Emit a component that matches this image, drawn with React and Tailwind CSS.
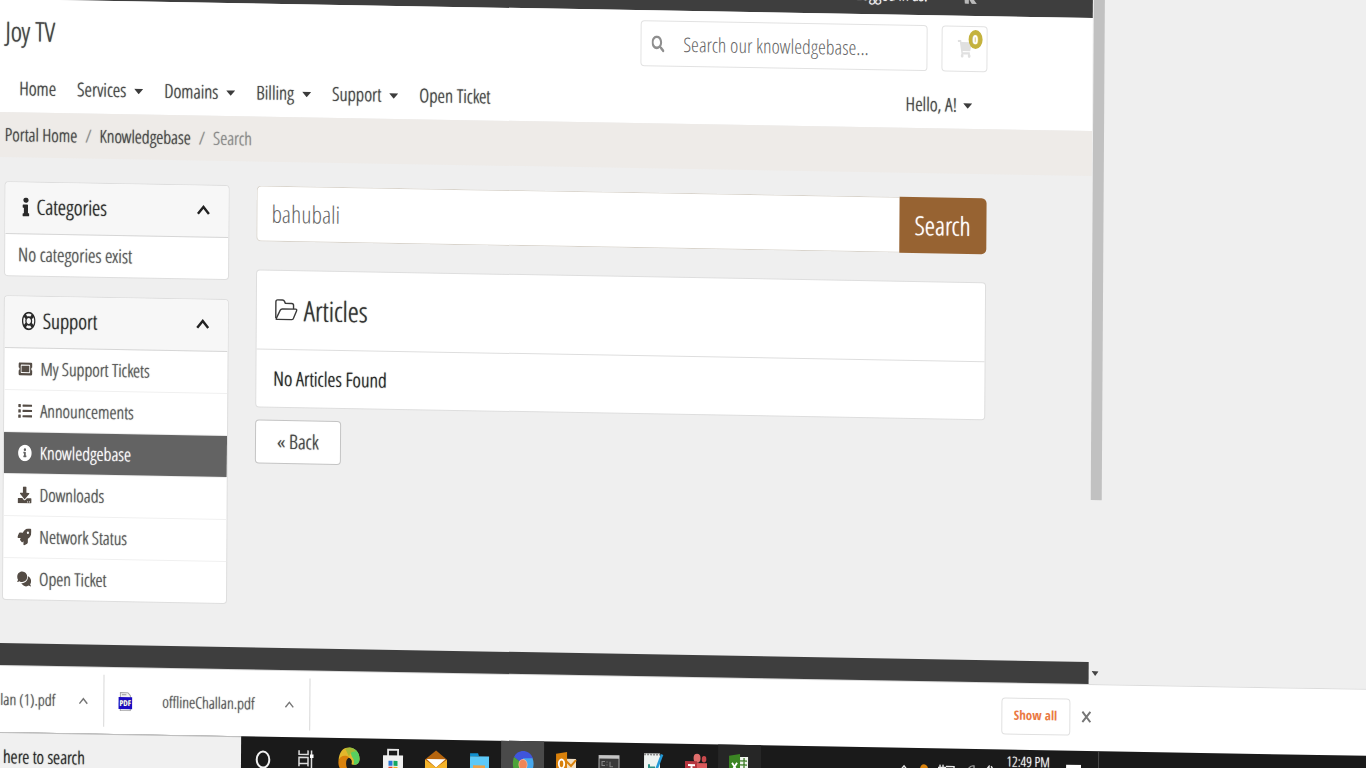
import {
  FaSearch,
  FaShoppingCart,
  FaInfo,
  FaRegLifeRing,
  FaTicketAlt,
  FaList,
  FaInfoCircle,
  FaDownload,
  FaRocket,
  FaComments,
} from "react-icons/fa";

const thin = "font-['Open_Sans_Condensed_Light','Open_Sans',sans-serif]";

function Caret() {
  return (
    <svg className="h-[6px] w-[9px]" viewBox="0 0 9 6" aria-hidden="true">
      <path d="M0 0.5h9L4.5 5.8z" fill="#3c3c3c" />
    </svg>
  );
}

function ChevronUp({ className, stroke = 2.4, color = "#222" }) {
  return (
    <svg className={className} viewBox="0 0 14 11" aria-hidden="true">
      <path d="M1.5 9.3 7 2.4l5.500 6.900" fill="none" stroke={color} strokeWidth={stroke} />
    </svg>
  );
}

function FolderOpen() {
  return (
    <svg className="h-[22px] w-[23px]" viewBox="0 0 23 22" fill="none" stroke="#3a3a3a" strokeWidth="1.4" strokeLinejoin="round" aria-hidden="true">
      <path d="M1 19.200V3.200Q1 1 2.800 1h4.800q1.400 0 2 1.400l.9 2h6.300q1.900 0 1.900 2V10" />
      <path d="M1.300 20 5.300 11.500Q6 10 7.500 10h13.300q1.600 0 1 1.500l-2.900 7.200Q18.400 20.500 17 20.500H2.500Q1 20.500 1.300 20z" />
    </svg>
  );
}

const menu = [
  { label: "Home" },
  { label: "Services", caret: true },
  { label: "Domains", caret: true },
  { label: "Billing", caret: true },
  { label: "Support", caret: true },
  { label: "Open Ticket" },
];

const supportLinks = [
  { label: "My Support Tickets", Icon: FaTicketAlt },
  { label: "Announcements", Icon: FaList },
  { label: "Knowledgebase", Icon: FaInfoCircle, active: true },
  { label: "Downloads", Icon: FaDownload },
  { label: "Network Status", Icon: FaRocket },
  { label: "Open Ticket", Icon: FaComments },
];

function TopBar() {
  return (
    <div className="flex h-[39px] items-center justify-end gap-9 bg-[#3e3e3e] pb-[2px] pr-[115px] text-[17px] text-white">
      <span>Logged in as:</span>
      <svg className="h-4 w-[14px]" viewBox="0 0 14 16" aria-hidden="true">
        <path d="M0 0h13v9H8l5 7H8L5 11v5H1z" fill="#b9b9b9" />
      </svg>
    </div>
  );
}

function Header() {
  return (
    <header className="bg-white pr-[105px] pt-[10px]">
      <div className="flex items-start gap-[14px] pl-[6px]">
        <a href="#home" className="mr-auto text-[27px] leading-[44px] text-[#444]">
          Joy TV
        </a>
        <form className="flex h-[46px] w-[287px] items-center rounded border border-[#e2e2e2] bg-white">
          <button type="button" aria-label="Submit search" className="pl-[10px]">
            <FaSearch preserveAspectRatio="none" className="h-[17px] w-[13px] text-[#8f8f8f]" />
          </button>
          <input
            aria-label="Search our knowledgebase"
            placeholder="Search our knowledgebase..."
            className="h-full min-w-0 flex-1 bg-transparent pl-[19px] text-[20px] outline-none placeholder:text-[#666]"
          />
        </form>
        <a
          href="#cart"
          aria-label="Shopping cart"
          className="relative flex h-[46px] w-[46px] items-center justify-center rounded border border-[#e2e2e2]"
        >
          <FaShoppingCart preserveAspectRatio="none" className="h-[18px] w-[14px] text-[#e0e0e0]" />
          <span className="absolute right-[4px] top-[3px] flex h-[19px] w-[14px] items-center justify-center rounded-[50%] bg-[#c4b23d] font-['Open_Sans_Condensed','Open_Sans',sans-serif] text-[12px] font-bold text-white">
            0
          </span>
        </a>
      </div>
      <nav className="flex h-[57px] items-center gap-[21px] pl-[20px] pr-[15px] pt-[10px] text-[19px] text-[#444]">
        {menu.map((item) => (
          <a key={item.label} href={"#" + item.label.replace(" ", "-")} className="flex items-center gap-[8px] whitespace-nowrap">
            {item.label}
            {item.caret && <Caret />}
          </a>
        ))}
        <a href="#account" className="ml-auto flex items-center gap-[6px]">
          Hello, A!
          <Caret />
        </a>
      </nav>
    </header>
  );
}

function CardHeader({ icon, title }) {
  return (
    <h3 className="flex h-[52px] items-center gap-[7px] border-b border-[#d6d6d6] bg-[#f7f7f7] pb-[2px] pl-[17px] pr-[18px] text-[21px] text-[#2a2a2a]">
      {icon}
      <span className="flex-1">{title}</span>
      <button type="button" aria-label={"Toggle " + title}>
        <ChevronUp className="h-[11px] w-[14px]" />
      </button>
    </h3>
  );
}

function Sidebar() {
  return (
    <aside className="flex w-[225px] shrink-0 flex-col gap-[19px]">
      <section className="overflow-hidden rounded border border-[#dedede] bg-white">
        <CardHeader title="Categories" icon={<FaInfo preserveAspectRatio="none" className="h-[19px] w-[7px]" />} />
        <p className="pl-[13px] text-[19px] leading-[41px] text-[#555]">No categories exist</p>
      </section>
      <section className="overflow-hidden rounded border border-[#dedede] bg-white">
        <CardHeader title="Support" icon={<FaRegLifeRing preserveAspectRatio="none" className="h-[19px] w-[14px]" />} />
        <ul>
          {supportLinks.map(({ label, Icon, active }) => (
            <li key={label} className="border-b border-[#f0f0f0] last:border-b-0">
              <a
                href={"#" + label.replaceAll(" ", "-")}
                className={
                  "flex h-[41px] items-center gap-2 pl-[14px] text-[18px] " +
                  (active ? "bg-[#636363] text-white" : "text-[#555]")
                }
              >
                <Icon
                  preserveAspectRatio="none"
                  className={"h-[17px] w-[14px] " + (active ? "text-white" : "text-[#544c45]")}
                />
                {label}
              </a>
            </li>
          ))}
        </ul>
      </section>
    </aside>
  );
}

function Content() {
  return (
    <main className="flex min-w-0 flex-1 flex-col">
      <form className="flex h-[56px]">
        <input
          aria-label="Search"
          defaultValue="bahubali"
          className="min-w-0 flex-1 rounded-l-[5px] border border-r-0 border-[#d9d4cc] bg-white pl-[14px] text-[24px] text-[#666] outline-none"
        />
        <button
          type="button"
          className="w-[87px] rounded-r-[5px] bg-[#976332] text-[26px] text-white [text-shadow:0_0_1px_currentColor]"
        >
          Search
        </button>
      </form>
      <section className="mt-[28px] rounded border border-[#dedede] bg-white">
        <h2 className="flex h-[79px] items-center gap-[6px] border-b border-[#dedede] pl-[18px] text-[28px] text-[#333]">
          <FolderOpen />
          Articles
        </h2>
        <p className="pl-[17px] text-[20px] leading-[57px] text-[#222]">No Articles Found</p>
      </section>
      <button
        type="button"
        className="mt-[12px] h-[44px] self-start rounded border border-[#c4c4c4] bg-white px-[21px] text-[20px] text-[#444] [text-shadow:0_0_1px_currentColor]"
      >
        « Back
      </button>
    </main>
  );
}

function Site() {
  return (
    <div className="w-[79.2%]">
      <TopBar />
      <Header />
      <ol className="flex h-[45px] items-center gap-[8px] bg-[#eeebe8] pl-[6px] text-[18px] text-[#444]">
        <li>
          <a href="#portal">Portal Home</a>
        </li>
        <li className="text-[#888]">/</li>
        <li>
          <a href="#knowledgebase">Knowledgebase</a>
        </li>
        <li className="text-[#888]">/</li>
        <li className="text-[#888]">Search</li>
      </ol>
      <div className="flex gap-[27px] pb-[43px] pl-[6px] pr-[105px] pt-[24px]">
        <Sidebar />
        <Content />
      </div>
      <div className="h-[22px] bg-[#3e3e3e]" />
    </div>
  );
}

function Scrollbar() {
  return (
    <div className="flex w-[13px] flex-col items-center justify-between pb-[8px]">
      <div className="h-[521px] w-[11px] bg-[#c1c1c1]" />
      <svg className="h-[5px] w-[7px]" viewBox="0 0 9 6" preserveAspectRatio="none" aria-hidden="true">
        <path d="M0 0h9L4.500 6z" fill="#444" />
      </svg>
    </div>
  );
}

function PdfIcon() {
  return (
    <svg className="h-[19px] w-[14px]" viewBox="0 0 14 19" aria-hidden="true">
      <path d="M2 .5h7.500L12 3.500V18.500H2z" fill="#f4f4f4" stroke="#a5a5a5" />
      <path d="M3.500 2.500h4.500" stroke="#999" />
      <rect y="5" width="14" height="12" fill="#1c0bc4" />
      <text x="7" y="13.800" textAnchor="middle" fontFamily="Open Sans Condensed, Open Sans" fontWeight="700" fontSize="8" fill="#fff">
        PDF
      </text>
    </svg>
  );
}

function DownloadsBar() {
  return (
    <div className="flex h-[67px] items-center border-t border-[#dcdcdc] bg-white text-[16px] text-[#555]">
      <div className="flex h-[52px] w-[109px] items-center justify-between border-r border-[#d8d8d8] pr-[15px]">
        <span className="pl-[2px]">llan (1).pdf</span>
        <button type="button" aria-label="Options for first download">
          <ChevronUp className="h-[9px] w-[10px]" stroke={2} color="#777" />
        </button>
      </div>
      <div className="flex h-[52px] w-[206px] items-center border-r border-[#d8d8d8] pl-[14px] pr-[15px]">
        <PdfIcon />
        <span className="flex-1 pl-[30px]">offlineChallan.pdf</span>
        <button type="button" aria-label="Options for second download">
          <ChevronUp className="h-[9px] w-[10px]" stroke={2} color="#777" />
        </button>
      </div>
      <div className="ml-auto mr-[284px] flex items-center gap-[11px] pb-[2px]">
        <button
          type="button"
          className="h-[37px] w-[69px] rounded border border-[#e0e0e0] font-['Open_Sans_Condensed','Open_Sans',sans-serif] text-[13px] font-bold text-[#ea7a44]"
        >
          Show all
        </button>
        <button type="button" aria-label="Close downloads">
          <svg className="h-[12px] w-[10px]" viewBox="0 0 10 12" aria-hidden="true">
            <path d="M1 .8 9 11.200M9 .8 1 11.200" stroke="#777" strokeWidth="2" />
          </svg>
        </button>
      </div>
    </div>
  );
}

function TaskIcon({ label, active, dim, children }) {
  return (
    <button
      type="button"
      aria-label={label}
      className={
        "flex h-full flex-1 items-start justify-center pt-[9px] " +
        (active ? "bg-[#4a4a4a]" : dim ? "bg-[#262626]" : "")
      }
    >
      <svg className="h-[30px] w-[24px]" viewBox="0 0 24 30">
        {children}
      </svg>
    </button>
  );
}

function Taskbar() {
  return (
    <div className="flex h-[60px] bg-[#1a1a1a] text-white">
      <label className="flex h-full w-[246px] shrink-0 border-t border-[#bdbdbd] bg-[#f0f0f0]">
        <span className="sr-only">Search</span>
        <input
          placeholder="here to search"
          className="h-[46px] w-full bg-transparent pl-[8px] text-[18px] outline-none [text-shadow:0_0_1px_currentColor] placeholder:text-[#222]"
        />
      </label>
      <div className="flex h-full w-[520px]">
        <TaskIcon label="Cortana">
          <ellipse cx="12" cy="14" rx="6.300" ry="8" fill="none" stroke="#f0f0f0" strokeWidth="2" />
        </TaskIcon>
        <TaskIcon label="Task view">
          <path d="M5 4v4h9V4M5 20v-9h9v9M5 17h9M17.500 4v18" fill="none" stroke="#ddd" strokeWidth="1.500" />
          <rect x="16" y="8" width="3.500" height="3.500" fill="#fff" />
        </TaskIcon>
        <TaskIcon label="Edge">
          <path d="M1.500 14C2 5 6 .5 12 .5c6.500 0 11 5.500 10.500 12-.5 5-5 6-8 4.500 1-3.500 0-6-4-6.500C6 9.200 3 11 1.500 14z" fill="#e3b82c" />
          <path d="M12 .5c6.500 0 11 5.500 10.500 12-.3 4-3 5.500-6 5 1.500-6-1.500-7-2-9z" fill="#59cf5f" />
          <path d="M8 1.500c5-2 9-.5 11 3-3-1-6 1-7 5z" fill="#a8b935" />
          <path d="M1.500 14c1-5 7-7 11-3.500-3 1-4 4-3 9L12 26C4 26 .8 20 1.500 14z" fill="#d9820c" />
        </TaskIcon>
        <TaskIcon label="Store">
          <path d="M7 9V2h10v7" fill="none" stroke="#e8e8e8" strokeWidth="1.800" />
          <path d="M2 7.500h20v20H2z" fill="#f1f1f1" />
          <path d="M7.500 13h4v5h-4z" fill="#2878d8" />
          <path d="M12.500 13h4v5h-4z" fill="#15a862" />
          <path d="M7.500 19h4v5h-4z" fill="#e9452c" />
          <path d="M12.500 19h4v5h-4z" fill="#f2ae20" />
        </TaskIcon>
        <TaskIcon label="Mail">
          <path d="M1 11 12 2l11 9v16H1z" fill="#b5650e" />
          <path d="M2.500 10.500h19L12 19z" fill="#fff" />
          <path d="M1 11l11 8 11-8v16H1z" fill="#f4b42b" />
        </TaskIcon>
        <TaskIcon label="File Explorer">
          <path d="M3 4h8l1 3h-9z" fill="#1191d0" />
          <path d="M3 7h19v20H3z" fill="#5cc9f8" />
          <path d="M6 16h12v10H6z" fill="#e8a14a" />
        </TaskIcon>
        <TaskIcon label="Chrome" active>
          <path d="M12 14 3 7C6-1 18-2 22 8z" fill="#3f55dc" />
          <path d="M12 14 3 7C1 12 1.500 20 5 24z" fill="#4da33a" />
          <path d="M12 14V8h9.500C24 14 22 22 17 26z" fill="#46a8ee" />
          <ellipse cx="12" cy="14.500" rx="4.500" ry="5.600" fill="#f3b79b" />
          <ellipse cx="12" cy="14.500" rx="3.800" ry="5" fill="#f08657" />
        </TaskIcon>
        <TaskIcon label="Outlook">
          <path d="M11 8h11v14H11z" fill="#f1dfc4" />
          <path d="m11 9 6 6 5-6" fill="none" stroke="#d9820c" strokeWidth="2" />
          <path d="m2 3 11-2v26L2 25z" fill="#d8800b" />
          <ellipse cx="7.500" cy="13" rx="2.700" ry="4.300" fill="none" stroke="#fff" strokeWidth="1.800" />
        </TaskIcon>
        <TaskIcon label="Command Prompt">
          <path d="M2 4h20v22H2z" fill="#3a3a3a" stroke="#a9a9a9" />
          <path d="M2 4h20v3H2z" fill="#c5c5c5" />
          <path d="M8 10H5v4h3M10 10v1m0 2v1M13 10v5h3" stroke="#888" fill="none" />
        </TaskIcon>
        <TaskIcon label="Notes">
          <path d="M3 1h16v25H3z" fill="#eef3f1" />
          <path d="M3 2h16" stroke="#888" strokeDasharray="2 1" strokeWidth="2" />
          <path d="M8 19v-7M8 15h5v4" stroke="#2a8d83" strokeWidth="2" fill="none" />
          <path d="m21 2-6 16" stroke="#2399d7" strokeWidth="2.600" />
        </TaskIcon>
        <TaskIcon label="Teams">
          <ellipse cx="13" cy="5" rx="3.500" ry="4.500" fill="#e06e6c" />
          <ellipse cx="20" cy="6" rx="2.300" ry="3.200" fill="#c9494c" />
          <path d="M10 10h13v14H10z" fill="#d9595b" />
          <path d="M1 8h12v16H1z" fill="#b5353e" />
          <path d="M4 12h7M7.500 12v8" stroke="#fff" strokeWidth="2" />
        </TaskIcon>
        <TaskIcon label="Excel" dim>
          <path d="M12 3h9v20h-9z" fill="#f0f5ee" />
          <path d="M13 7h7M13 11h7M13 15h7M17 4v18" stroke="#3b7c25" strokeWidth="1.300" />
          <path d="m2 2 11-2v26L2 25z" fill="#3b8523" />
          <path d="m5 9 5 8m0-8-5 8" stroke="#fff" strokeWidth="1.800" />
        </TaskIcon>
      </div>
      <div className="ml-auto mr-[276px] flex h-full items-start border-r border-[#4a4a4a]">
        <svg className="mt-[16px] h-[24px] w-[100px]" viewBox="0 0 100 24" fill="none" stroke="#e8e8e8" strokeWidth="1.400" aria-hidden="true">
          <path d="m6 7 4-5 4 5" />
          <ellipse cx="30" cy="5" rx="4" ry="5" fill="#d9820c" stroke="none" />
          <path d="M46 0v9M49 0v9M44 3h8M52 2h8v8" />
          <path d="M73 6q3-6 7-5v10" stroke="#999" />
          <path d="M88 6h3l4-5v10M97 1q4 5 0 9" />
        </svg>
        <span className="pl-[12px] text-[14px] leading-[24px]">12:49 PM</span>
        <svg className="ml-[16px] mr-[17px] mt-[14px] h-[20px] w-[15px]" viewBox="0 0 15 20" aria-hidden="true">
          <path d="M0 0h15v14H9l-3 4v-4H0z" fill="#fff" />
        </svg>
      </div>
    </div>
  );
}

export default function App() {
  return (
    <div className="h-screen overflow-hidden bg-[#efefef]">
      <div
        className={
          "-mt-10 w-[101%] origin-top-left [transform:skewY(1deg)_skewX(-0.36deg)] [text-shadow:0_0_1px_currentColor] " + thin
        }
      >
        <div className="flex">
          <Site />
          <Scrollbar />
        </div>
        <DownloadsBar />
        <Taskbar />
      </div>
    </div>
  );
}
